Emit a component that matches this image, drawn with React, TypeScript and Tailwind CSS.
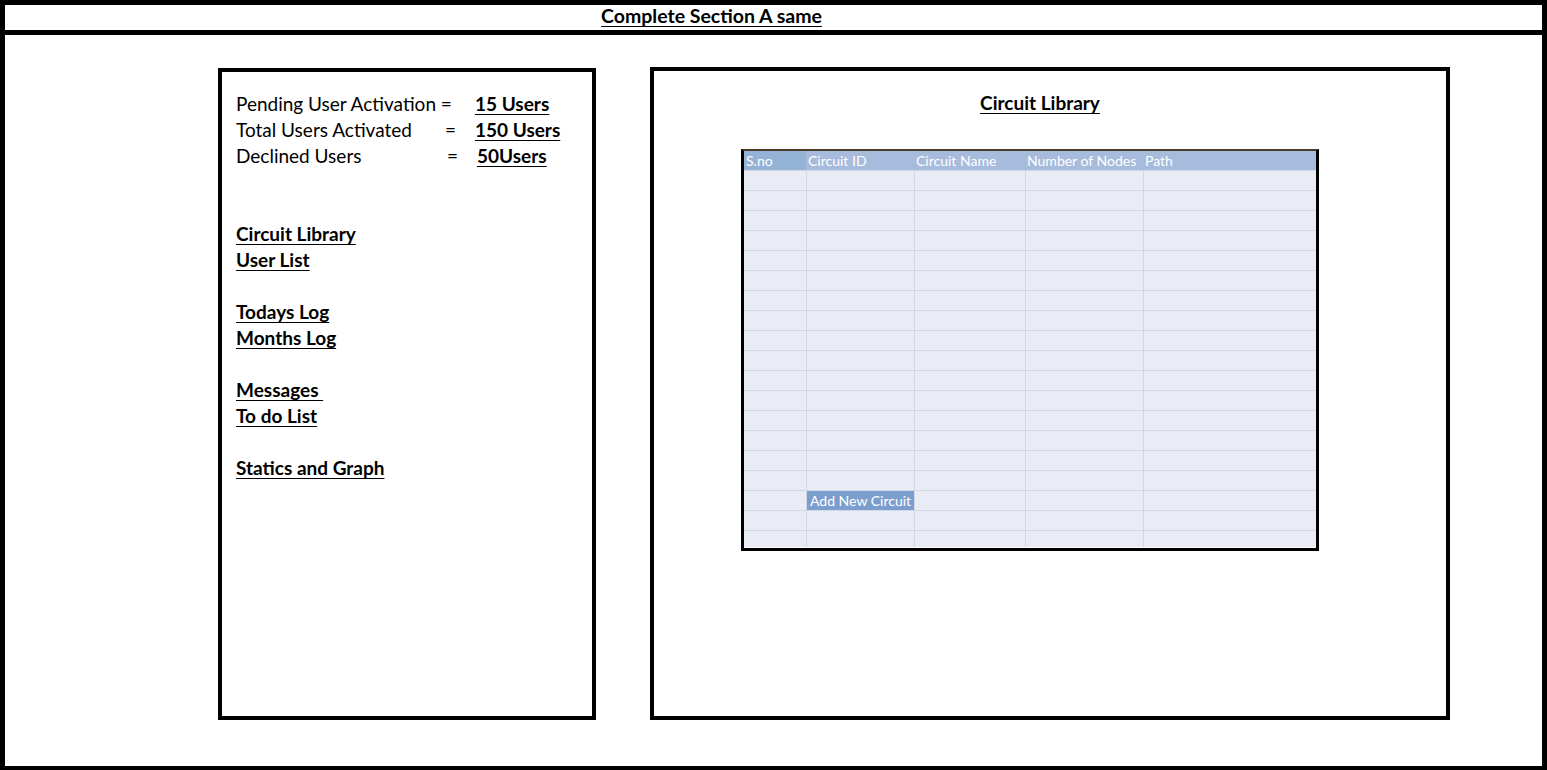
const FONT = { fontFamily: "Lato, 'Open Sans', 'Liberation Sans', sans-serif" }

const STATS = [
  { label: "Pending User Activation =", eq: "", labelW: "w-[239px]", value: "15 Users" },
  { label: "Total Users Activated", eq: "=", labelW: "w-[209px]", value: "150 Users" },
  { label: "Declined Users", eq: "=", labelW: "w-[211px]", value: "50Users" },
]

const LINKS: (string | null)[] = [
  "Circuit Library",
  "User List",
  null,
  "Todays Log",
  "Months Log",
  null,
  "Messages ",
  "To do List",
  null,
  "Statics and Graph",
]

const COLS = [
  { name: "S.no", w: "w-[62px]" },
  { name: "Circuit ID", w: "w-[108px]" },
  { name: "Circuit Name", w: "w-[111px]" },
  { name: "Number of Nodes", w: "w-[118px]" },
  { name: "Path", w: "w-[173px]" },
]

const ROWS = Array.from({ length: 19 }, (_, i) => i)

function CircuitTable() {
  return (
    <div className="w-[578px] border-l-[3px] border-r-[3px] border-b-[3px] border-t-2 border-l-black border-r-black border-b-black border-t-[#4a3a28]">
      {/* header */}
      <div className="flex h-[19px] bg-[#a7bbdc] text-white text-[14px] leading-[19px]">
        {COLS.map((c, i) => (
          <div
            key={c.name}
            className={`${c.w} pl-[2px] whitespace-nowrap ${i === 0 ? "bg-[#95b3d7]" : ""}`}
          >
            {c.name}
          </div>
        ))}
      </div>
      {/* body */}
      <div className="h-[378px] overflow-hidden bg-[#e9ebf5] border-b border-white">
        {ROWS.map((r) => (
          <div key={r} className="flex h-[20px] border-t border-[#d0d7e5]">
            {COLS.map((c, i) => (
              <div
                key={c.name}
                className={`${c.w} ${i > 0 ? "border-l border-[#d0d7e5]" : ""} ${
                  r === 16 && i === 1 ? "bg-[#7c9ecf] text-white text-[14px] leading-[19px] pl-[3px] whitespace-nowrap" : ""
                }`}
              >
                {r === 16 && i === 1 ? "Add New Circuit" : null}
              </div>
            ))}
          </div>
        ))}
      </div>
    </div>
  )
}

export default function App() {
  return (
    <div style={FONT} className="w-[1547px] h-[770px] bg-white text-black border-[5px] border-black border-b-4 flex flex-col">
      {/* header strip */}
      <div className="h-[30px] border-b-[5px] border-black pl-[596px]">
        <span className="font-bold underline underline-offset-[3px] text-[19.5px] leading-[19px]">
          Complete Section A same
        </span>
      </div>

      <div className="flex gap-[54px] pl-[213px] pt-[33px]">
        {/* left panel */}
        <div className="w-[378px] h-[652px] border-[4px] border-black pl-[14px] pt-[19px] text-[19px] leading-[26px]">
          <div>
            {STATS.map((s) => (
              <div key={s.label} className="flex">
                <span className={`${s.labelW} whitespace-nowrap`}>{s.label}</span>
                {s.eq ? <span className="w-[30px]">{s.eq}</span> : null}
                <span className="font-bold underline underline-offset-[3px]">{s.value}</span>
              </div>
            ))}
          </div>
          <div className="mt-[52px]">
            {LINKS.map((l, i) =>
              l ? (
                <div key={i} className="font-bold underline underline-offset-[3px] whitespace-pre">
                  {l}
                </div>
              ) : (
                <div key={i} className="h-[26px]" />
              )
            )}
          </div>
        </div>

        {/* right panel */}
        <div className="w-[800px] h-[653px] border-[4px] border-black -mt-px">
          <div className="pt-[19px] pr-[20px] text-center text-[19px] leading-[26px]">
            <span className="font-bold underline underline-offset-[3px]">Circuit Library</span>
          </div>
          <div className="ml-[87px] mt-[33px]">
            <CircuitTable />
          </div>
        </div>
      </div>
    </div>
  )
}
